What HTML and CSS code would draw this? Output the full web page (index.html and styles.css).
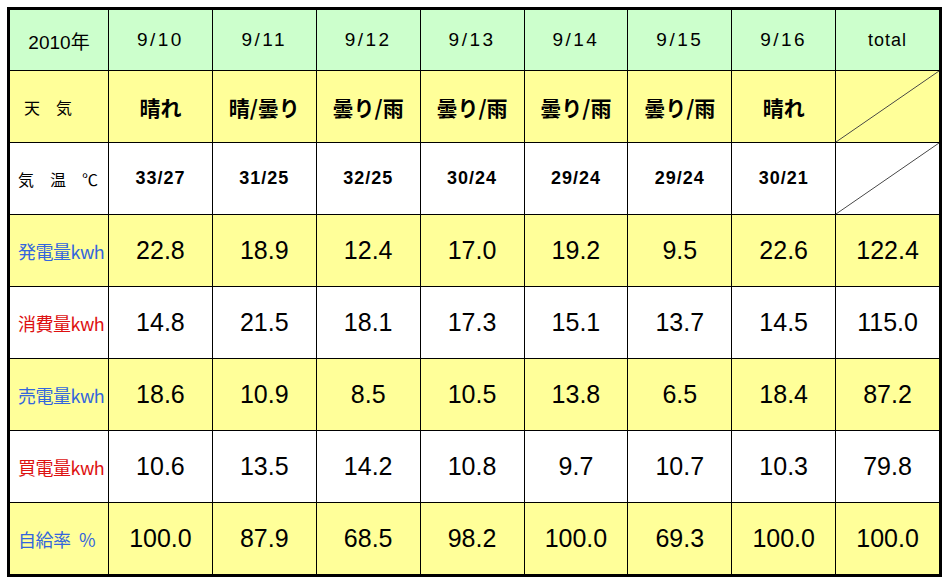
FILE: index.html
```html
<!DOCTYPE html>
<html lang="ja">
<head>
<meta charset="utf-8">
<title>発電量</title>
<link rel="stylesheet" href="styles.css">
</head>
<body>
<div class="frame">
  <div class="grid">
    <div class="c hd first">2010年</div>
    <div class="c hd">9/10</div>
    <div class="c hd">9/11</div>
    <div class="c hd">9/12</div>
    <div class="c hd">9/13</div>
    <div class="c hd">9/14</div>
    <div class="c hd">9/15</div>
    <div class="c hd">9/16</div>
    <div class="c hd tot">total</div>

    <div class="c y lbl small tenki">天　気</div>
    <div class="c y wx">晴れ</div>
    <div class="c y wx">晴/曇り</div>
    <div class="c y wx">曇り/雨</div>
    <div class="c y wx">曇り/雨</div>
    <div class="c y wx">曇り/雨</div>
    <div class="c y wx">曇り/雨</div>
    <div class="c y wx">晴れ</div>
    <div class="c y diag"></div>

    <div class="c w lbl small">気　温　℃</div>
    <div class="c w tmp">33/27</div>
    <div class="c w tmp">31/25</div>
    <div class="c w tmp">32/25</div>
    <div class="c w tmp">30/24</div>
    <div class="c w tmp">29/24</div>
    <div class="c w tmp">29/24</div>
    <div class="c w tmp">30/21</div>
    <div class="c w diag"></div>

    <div class="c y lbl blue">発電量kwh</div>
    <div class="c y num">22.8</div>
    <div class="c y num">18.9</div>
    <div class="c y num">12.4</div>
    <div class="c y num">17.0</div>
    <div class="c y num">19.2</div>
    <div class="c y num">9.5</div>
    <div class="c y num">22.6</div>
    <div class="c y num">122.4</div>

    <div class="c w lbl red">消費量kwh</div>
    <div class="c w num">14.8</div>
    <div class="c w num">21.5</div>
    <div class="c w num">18.1</div>
    <div class="c w num">17.3</div>
    <div class="c w num">15.1</div>
    <div class="c w num">13.7</div>
    <div class="c w num">14.5</div>
    <div class="c w num">115.0</div>

    <div class="c y lbl blue">売電量kwh</div>
    <div class="c y num">18.6</div>
    <div class="c y num">10.9</div>
    <div class="c y num">8.5</div>
    <div class="c y num">10.5</div>
    <div class="c y num">13.8</div>
    <div class="c y num">6.5</div>
    <div class="c y num">18.4</div>
    <div class="c y num">87.2</div>

    <div class="c w lbl red">買電量kwh</div>
    <div class="c w num">10.6</div>
    <div class="c w num">13.5</div>
    <div class="c w num">14.2</div>
    <div class="c w num">10.8</div>
    <div class="c w num">9.7</div>
    <div class="c w num">10.7</div>
    <div class="c w num">10.3</div>
    <div class="c w num">79.8</div>

    <div class="c y lbl blue">自給率&#8194;%</div>
    <div class="c y num">100.0</div>
    <div class="c y num">87.9</div>
    <div class="c y num">68.5</div>
    <div class="c y num">98.2</div>
    <div class="c y num">100.0</div>
    <div class="c y num">69.3</div>
    <div class="c y num">100.0</div>
    <div class="c y num">100.0</div>
  </div>
</div>
</body>
</html>
```
FILE: styles.css
```css
html, body {
  margin: 0;
  padding: 0;
  background: #ffffff;
}
body {
  padding: 7px 0 0 7px;
  font-family: "Liberation Sans", "Noto Sans CJK JP", sans-serif;
  color: #000;
}
.frame {
  width: 929px;
  height: 564px;
  border: 3px solid #000;
}
.grid {
  display: grid;
  grid-template-columns: 98px repeat(8, 1fr);
  grid-template-rows: 60px repeat(7, 1fr);
  gap: 1px;
  background: #000;
  width: 100%;
  height: 100%;
}
.c {
  display: flex;
  align-items: center;
  justify-content: center;
  white-space: nowrap;
  overflow: hidden;
}
.hd {
  background: #ccffcc;
  font-size: 19px;
  letter-spacing: 2.5px;
}
.hd.first {
  letter-spacing: 0;
  font-size: 19px;
}
.hd.tot {
  letter-spacing: 1px;
  font-size: 18px;
}
.y { background: #ffff99; }
.w { background: #ffffff; }
.lbl {
  justify-content: flex-start;
  padding-left: 8px;
  font-family: "Noto Sans CJK JP", sans-serif;
  font-size: 18px;
  letter-spacing: -0.5px;
}
.lbl.small {
  font-size: 16px;
  letter-spacing: 0;
}
.tenki { padding-left: 14px; }
.blue { color: #3366dd; }
.red { color: #dd1111; }
.wx {
  font-family: "Noto Sans CJK JP", sans-serif;
  font-weight: 700;
  font-size: 21px;
}
.tmp {
  font-weight: 700;
  font-size: 18px;
  letter-spacing: 1px;
}
.num {
  font-size: 25px;
}
.diag {
  background-image: linear-gradient(to bottom right,
    transparent calc(50% - 0.8px),
    #444 50%,
    transparent calc(50% + 0.8px));
}
.w.diag { background-color: #ffffff; }
.y.diag { background-color: #ffff99; }
```
